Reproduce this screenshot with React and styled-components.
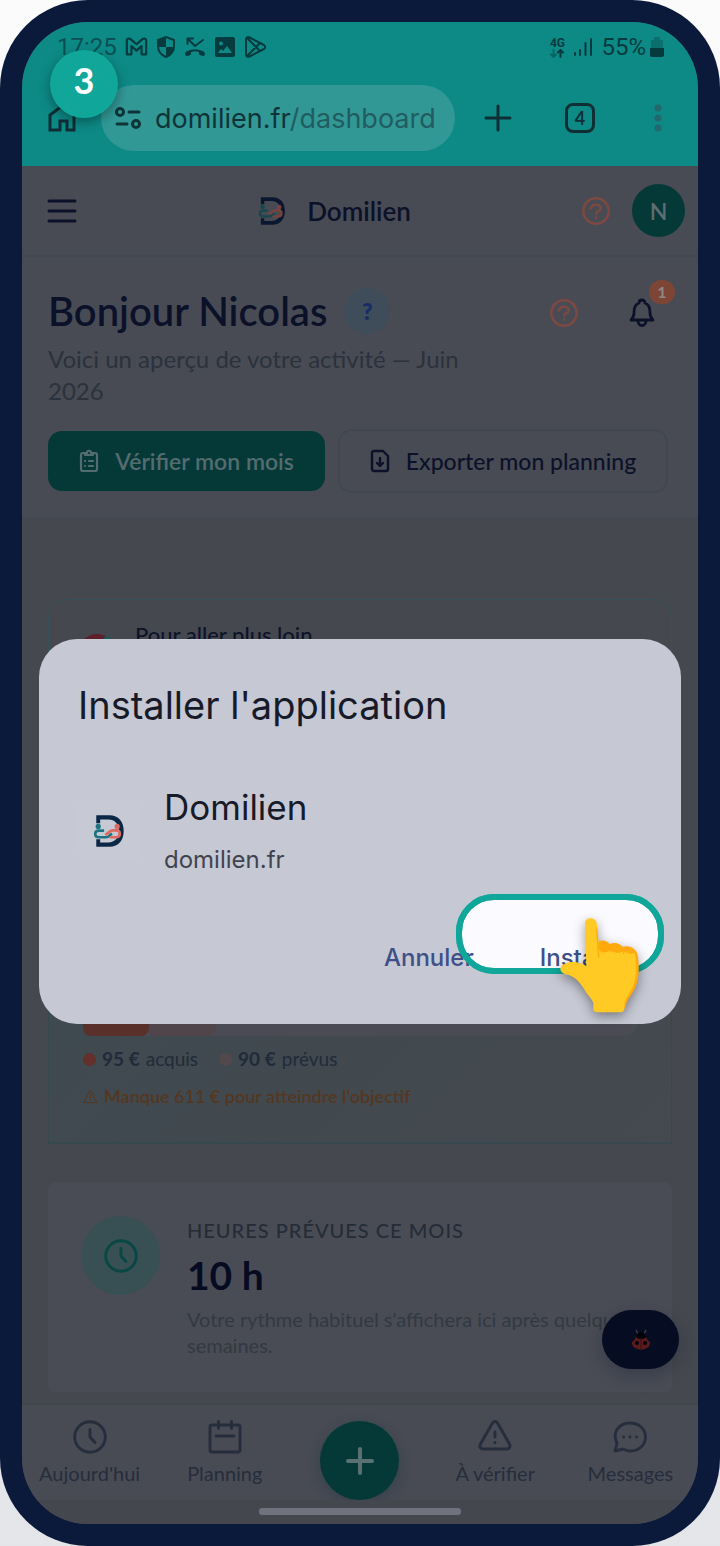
import styled, { createGlobalStyle } from 'styled-components';

const GlobalStyle = createGlobalStyle`
    * { box-sizing: border-box; }
    body {
        margin: 0;
        background: linear-gradient(#fbfbfb, #e4e5e9);
        font-family: "Lato", "Liberation Sans", sans-serif;
    }
    h1, h2, h3, p { margin: 0; }
    button {
        border: 0;
        padding: 0;
        background: none;
        font: inherit;
        color: inherit;
        cursor: pointer;
    }
    a { color: inherit; text-decoration: none; }
    svg { display: block; flex: none; }
`;

const Icon = ({ size = 32, width, height, box = '0 0 24 24', stroke = 2, children }) => (
    <svg
        width={width || size}
        height={height || size}
        viewBox={box}
        fill="none"
        stroke="currentColor"
        strokeWidth={stroke}
        strokeLinecap="round"
        strokeLinejoin="round"
        aria-hidden="true"
    >
        {children}
    </svg>
);

const HelpIcon = () => (
    <Icon size={30} box="0 0 30 30" stroke={2.6}>
        <circle cx="15" cy="15" r="12.7" />
        <path d="M9.500 12.500c1.500-3 4-4 6-3.700 3 .3 4.800 2 4.200 4.200-.6 2.400-4.400 2-4.500 4.600" />
        <path d="M15.200 21.600v.2" />
    </Icon>
);

const ClockIcon = ({ size }) => (
    <Icon size={size} box="0 0 34 34" stroke={2.9}>
        <circle cx="17" cy="17" r="15.300" />
        <path d="M17 9.500v7.500l5 5.500" />
    </Icon>
);

const Logo = ({ width, height, navy, teal, coral }) => (
    <svg width={width} height={height} viewBox="218 704 98 104" aria-hidden="true">
        <path fill={navy} d="M228 708h40c29 0 44 20 44 48s-15 48-44 48h-40v-23h12v10h25c20 0 32-14 33-35-1-21-13-35-33-35h-25v11h-12z" />
        <circle cx="234" cy="742" r="8" fill={teal} />
        <circle cx="292" cy="742" r="8" fill={coral} />
        <path d="M252 755h-16c-15 0-15 20 0 20h22c5 0 8-2 11-5l7-6" fill="none" stroke={teal} strokeWidth="8" />
        <path d="M256 768l13-10c3-3 6-4 10-4h10c15 0 15 21 0 21h-20" fill="none" stroke={coral} strokeWidth="8" />
    </svg>
);

const Hand = () => (
    <svg width="80" height="97" viewBox="600 170 240 290" aria-hidden="true">
        <path fill="#ffa90a" d="M706 262c8-24 36-24 46-8 12-6 30-4 38 8 22-6 42 4 46 26 6 40 4 70-8 98-8 18-26 34-30 62l-90-60z" />
        <path fill="#ffca24" d="M604 328c4-18 30-22 48-20 14 2 22 6 30 12l-4-130c0-18 32-18 35 0l8 82c6 8 26 10 34-2 10 12 30 14 40 2 8 10 20 14 32 8 8 40 6 72-4 98-8 20-22 34-26 52l-1 18c0 6-4 10-10 10h-72c-8 0-11-4-11-10v-18c-4-12-14-20-22-32-18-30-32-46-54-52-14-2-22-8-23-18z" />
        <path fill="none" stroke="#ffa90a" strokeWidth="4" strokeLinecap="round" d="M713 208l6 84M756 258v18M796 266l-2 16" />
    </svg>
);

export default function App() {
    return (
        <>
            <GlobalStyle />
            <Phone>
                <Screen>
                    <StatusBar>
                        <StatusGroup>
                            <Clock>17:25</Clock>
                            <Icon width={23} height={22} box="0 0 25 22" stroke={2.4}>
                                <path d="M2 19V4c0-2 2-3 4-1.500l6.500 5.500L19 2.500C21 1 23 2 23 4v15h-5v-9l-5.500 5L7 10v9z" />
                            </Icon>
                            <Icon width={20} height={24} box="0 0 20 24">
                                <path d="M10 2l8 3v6c0 5-3 9-8 11-5-2-8-6-8-11V5z" />
                                <path fill="currentColor" stroke="none" d="M10 2v10H2V5zM10 12h8c-.5 5-3 8-8 10z" />
                            </Icon>
                            <Icon width={22} height={22} box="0 0 22 22">
                                <path d="M19 4l-8 6-7-7M3.500 8V2.500H9" />
                                <path fill="currentColor" stroke="none" d="M1 18c0-6 20-6 20 0l-1 2c-2 0-5-1-5-2v-2c-3-1-5-1-8 0v2c0 1-3 2-5 2z" />
                            </Icon>
                            <Icon width={22} height={22} box="0 0 22 22">
                                <path fill="currentColor" fillRule="evenodd" stroke="none" d="M3 1h16a2 2 0 0 1 2 2v16a2 2 0 0 1-2 2H3a2 2 0 0 1-2-2V3a2 2 0 0 1 2-2zM4 17h14l-5-7-4 5-2-2zM7 5.500a2 2 0 1 0 .1 0z" />
                            </Icon>
                            <Icon width={23} height={24} box="0 0 23 24">
                                <path d="M2 4.500c0-2 1.500-3 3.500-2L20 10c1.500 1 1.500 3 0 4L5.500 21.500C3.500 22.500 2 21 2 19.500zM3 3l13 13M3 21L16 8" />
                            </Icon>
                        </StatusGroup>
                        <StatusGroup>
                            <Network>
                                4G
                                <Icon width={16} height={9} box="0 0 16 9" stroke={2}>
                                    <path d="M4.500 1v7M2 5.500L4.500 8 7 5.500" opacity=".5" />
                                    <path d="M11.500 8V1M9 3.500L11.500 1 14 3.500" />
                                </Icon>
                            </Network>
                            <Icon width={20} height={20} box="0 0 20 20" stroke={2}>
                                <path d="M2 18v-2M7 18v-5M12.500 18V6M18 18V2" />
                            </Icon>
                            <Battery>
                                55%
                                <Icon width={14} height={20} box="0 0 14 20">
                                    <path fill="currentColor" stroke="none" opacity=".35" d="M4 0h6v3h3v8H1V3h3z" />
                                    <path fill="currentColor" stroke="none" d="M0 11h14v7a2 2 0 0 1-2 2H2a2 2 0 0 1-2-2z" />
                                </Icon>
                            </Battery>
                        </StatusGroup>
                    </StatusBar>

                    <BrowserBar>
                        <button aria-label="Accueil">
                            <Icon size={30} box="0 0 30 30" stroke={3}>
                                <path strokeLinejoin="miter" d="M3 27V12L15 3l12 9v15h-7v-9h-7v9z" />
                            </Icon>
                        </button>
                        <Address>
                            <Icon width={26} height={22} box="0 0 26 22" stroke={3}>
                                <circle cx="5" cy="5" r="3.500" />
                                <circle cx="21" cy="17" r="3.500" />
                                <path d="M14 5h10M2 17h10" />
                            </Icon>
                            <span>domilien.fr<Path>/dashboard</Path></span>
                        </Address>
                        <BrowserActions>
                            <button aria-label="Nouvel onglet">
                                <Icon size={28} box="0 0 28 28" stroke={3}><path d="M14 2v24M2 14h24" /></Icon>
                            </button>
                            <Tabs aria-label="Onglets ouverts">4</Tabs>
                            <More aria-label="Plus d'options">
                                <Icon width={8} height={28} box="0 0 8 28">
                                    <g fill="currentColor" stroke="none">
                                        <circle cx="4" cy="4" r="3.500" />
                                        <circle cx="4" cy="14" r="3.500" />
                                        <circle cx="4" cy="24" r="3.500" />
                                    </g>
                                </Icon>
                            </More>
                        </BrowserActions>
                    </BrowserBar>

                    <AppHeader>
                        <MenuButton aria-label="Menu">
                            <Icon width={30} height={26} box="0 0 30 26" stroke={3}>
                                <path d="M2 3h26M2 13h26M2 23h26" />
                            </Icon>
                        </MenuButton>
                        <Brand href="#">
                            <Logo width={28} height={30} navy="#0b1730" teal="#16474d" coral="#7a433d" />
                            Domilien
                        </Brand>
                        <HeaderActions>
                            <HelpButton aria-label="Aide"><HelpIcon /></HelpButton>
                            <Avatar aria-label="Profil">N</Avatar>
                        </HeaderActions>
                    </AppHeader>

                    <Hero>
                        <HeroTop>
                            <div>
                                <Greeting>
                                    <h1>Bonjour Nicolas</h1>
                                    <Hint aria-label="Astuce">?</Hint>
                                </Greeting>
                                <Subtitle>Voici un aperçu de votre activité — Juin 2026</Subtitle>
                            </div>
                            <HeroIcons>
                                <HelpButton aria-label="Aide"><HelpIcon /></HelpButton>
                                <Bell aria-label="Notifications">
                                    <Icon size={30} box="0 0 30 30" stroke={2.8}>
                                        <path d="M4 22h22c-2-2-3-4-3-7 0-6-2-9-5-10 0-4-6-4-6 0-3 1-5 4-5 10 0 3-1 5-3 7zM11 23c0 6 8 6 8 0" />
                                    </Icon>
                                    <Badge>1</Badge>
                                </Bell>
                            </HeroIcons>
                        </HeroTop>
                        <HeroButtons>
                            <HeroButton $primary>
                                <Icon width={20} height={24} box="0 0 20 24" stroke={2.2}>
                                    <path d="M6 4H4a2 2 0 0 0-2 2v14a2 2 0 0 0 2 2h12a2 2 0 0 0 2-2V6a2 2 0 0 0-2-2h-2M6 6V4h2c0-3 4-3 4 0h2v2zM6 12h.1M6 17h.1M10 12h4M10 17h4" />
                                </Icon>
                                Vérifier mon mois
                            </HeroButton>
                            <HeroButton>
                                <Icon width={20} height={24} box="0 0 20 24" stroke={2.4}>
                                    <path d="M2 4a2 2 0 0 1 2-2h9l5 5v13a2 2 0 0 1-2 2H4a2 2 0 0 1-2-2zM10 9v8M7 14l3 3 3-3" />
                                </Icon>
                                Exporter mon planning
                            </HeroButton>
                        </HeroButtons>
                    </Hero>

                    <Main>
                        <MoreCard>
                            <Icon size={40} box="0 0 40 40" stroke={6}>
                                <circle cx="20" cy="20" r="16" stroke="#5c1f2b" />
                                <path d="M30 6l4 4" stroke="#1d5a5e" />
                            </Icon>
                            <h3>Pour aller plus loin</h3>
                        </MoreCard>

                        <GoalCard>
                            <Track>
                                <Earned />
                                <Planned />
                            </Track>
                            <Legend>
                                <li><Dot $color="#63302a" /><b>95 €</b> acquis</li>
                                <li><Dot $color="#53484c" /><b>90 €</b> prévus</li>
                            </Legend>
                            <Warning>
                                <Icon size={15} box="0 0 15 15" stroke={1}>
                                    <path d="M7.500 1.500L14 13.500H1zM7.500 5.500v4M7.500 11.500v.2" />
                                </Icon>
                                Manque 611 € pour atteindre l'objectif
                            </Warning>
                        </GoalCard>

                        <HoursCard>
                            <HoursIcon><ClockIcon size={34} /></HoursIcon>
                            <div>
                                <Label>Heures prévues ce mois</Label>
                                <Hours>10 h</Hours>
                                <Note>Votre rythme habituel s'affichera ici après quelques semaines.</Note>
                            </div>
                        </HoursCard>

                        <BugButton aria-label="Signaler un bug">
                            <svg width="20" height="22" viewBox="0 0 20 22" aria-hidden="true">
                                <path d="M7 5L5 1M13 5l2-4" stroke="#3d3b46" strokeWidth="1.500" />
                                <path d="M5 9c0-8 10-8 10 0z" fill="#020309" />
                                <path d="M1 13c2-1 3-3 4-5 2 3 8 3 10 0 1 2 2 4 4 5 1 10-19 10-18 0z" fill="#5b1b1b" />
                                <path d="M10 10v10" stroke="#3a1014" strokeWidth="1" />
                                <circle cx="6" cy="14" r="2" fill="#020309" />
                                <circle cx="14" cy="14" r="2" fill="#020309" />
                            </svg>
                        </BugButton>
                    </Main>

                    <Nav>
                        <NavItem href="#">
                            <ClockIcon size={34} />
                            Aujourd'hui
                        </NavItem>
                        <NavItem href="#">
                            <Icon size={34} box="0 0 34 34" stroke={2.9}>
                                <path d="M4 5h26a2 2 0 0 1 2 2v23a2 2 0 0 1-2 2H4a2 2 0 0 1-2-2V7a2 2 0 0 1 2-2zM10.500 1.500v7M23.500 1.500v7M8 16h18" />
                            </Icon>
                            Planning
                        </NavItem>
                        <AddButton aria-label="Ajouter">
                            <Icon size={28} box="0 0 28 28" stroke={4}><path d="M14 2v24M2 14h24" /></Icon>
                        </AddButton>
                        <NavItem href="#">
                            <Icon size={34} box="0 0 34 34" stroke={2.9}>
                                <path d="M14.500 3c1-2 4-2 5 0l12 21c1.500 3-.5 5-3 5h-23c-3 0-4.500-2-3-5zM17 12v5M17 22.500v.2" />
                            </Icon>
                            À vérifier
                        </NavItem>
                        <NavItem href="#">
                            <Icon size={34} box="0 0 34 34" stroke={2.9}>
                                <path d="M2 31l2-8C-1 13 5 3 17 3c9 0 15.500 6 15.500 14S26 31 17 31c-3 0-5-1-7-2zM10.500 17h.1M17 17h.1M23.500 17h.1" />
                            </Icon>
                            Messages
                        </NavItem>
                    </Nav>
                    <GestureArea><GestureBar /></GestureArea>

                    <Overlay>
                        <Dialog role="dialog" aria-labelledby="install-title">
                            <h2 id="install-title">Installer l'application</h2>
                            <AppRow>
                                <AppIcon>
                                    <Logo width={32} height={34} navy="#0b2746" teal="#1c7480" coral="#dc6a60" />
                                </AppIcon>
                                <div>
                                    <AppName>Domilien</AppName>
                                    <AppHost>domilien.fr</AppHost>
                                </div>
                            </AppRow>
                            <DialogActions>
                                <Spot />
                                <DialogButton>Annuler</DialogButton>
                                <DialogButton>Installer</DialogButton>
                                <Spot $ring />
                                <Pointer><Hand /></Pointer>
                            </DialogActions>
                        </Dialog>
                    </Overlay>
                    <Step>3</Step>
                </Screen>
            </Phone>
        </>
    );
}

const Phone = styled.div`
    display: flex;
    min-height: 100vh;
    padding: 22px;
    border-radius: 88px;
    background: #0b193b;
`;

const Screen = styled.div`
    position: relative;
    flex: 1;
    min-width: 0;
    display: flex;
    flex-direction: column;
    border-radius: 66px;
    background: #45484f;
    overflow: hidden;
`;

const StatusBar = styled.div`
    display: flex;
    align-items: center;
    justify-content: space-between;
    height: 50px;
    padding: 0 34px 0 35px;
    background: #0d8a86;
    color: #053b3e;
    font-family: Roboto, sans-serif;
    font-size: 24px;
`;

const StatusGroup = styled.div`
    display: flex;
    align-items: center;
    gap: 8px;
`;

const Clock = styled.span`
    color: #0a5054;
`;

const Network = styled.span`
    display: flex;
    flex-direction: column;
    align-items: center;
    font-size: 12px;
    line-height: 12px;
    font-weight: 700;
`;

const Battery = styled.span`
    display: flex;
    align-items: center;
    gap: 4px;
`;

const BrowserBar = styled.div`
    display: flex;
    align-items: center;
    height: 94px;
    padding: 0 36px 2px 25px;
    background: #0d8a86;
    color: #0f2f35;
`;

const Address = styled.button`
    flex: 1;
    display: flex;
    align-items: center;
    gap: 14px;
    height: 66px;
    margin: 0 29px 0 24px;
    padding: 0 0 0 14px;
    border-radius: 33px;
    background: #329896;
    font-family: Inter, sans-serif;
    font-size: 27px;
    color: #0f3438;
    white-space: nowrap;
`;

const Path = styled.span`
    color: #215c60;
`;

const BrowserActions = styled.div`
    display: flex;
    align-items: center;
    gap: 53px;
`;

const Tabs = styled.button`
    width: 30px;
    height: 30px;
    border: 3px solid #0f2f35;
    border-radius: 8px;
    font-size: 18px;
    line-height: 24px;
    font-weight: 700;
`;

const More = styled.button`
    padding-left: 6px;
    color: #23686c;
`;

const AppHeader = styled.header`
    display: flex;
    align-items: center;
    justify-content: space-between;
    height: 91px;
    padding: 0 13px 0 25px;
    background: #484b54;
    border-bottom: 2px solid #434952;
    color: #0b1129;
`;

const MenuButton = styled.button`
    width: 41px;
`;

const Brand = styled.a`
    display: flex;
    align-items: center;
    gap: 21px;
    font-size: 26px;
    font-weight: 600;
`;

const HeaderActions = styled.div`
    display: flex;
    align-items: center;
    gap: 21px;
`;

const HelpButton = styled.button`
    color: #7c4942;
`;

const Avatar = styled.button`
    width: 53px;
    height: 53px;
    border-radius: 50%;
    background: #053938;
    color: #5f6d72;
    font-size: 23px;
    font-weight: 600;
`;

const Hero = styled.section`
    padding: 30px 30px 24px 26px;
    background: #484b54;
    border-bottom: 2px solid #434851;
`;

const HeroTop = styled.div`
    display: flex;
    justify-content: space-between;
`;

const Greeting = styled.div`
    display: flex;
    align-items: center;
    gap: 17px;
    color: #0b1129;
    h1{
        font-size: 40px;
        line-height: 48px;
        font-weight: 600;
    }
`;

const Hint = styled.button`
    width: 46px;
    height: 46px;
    border-radius: 50%;
    background: #3f4c59;
    color: #182c65;
    font-size: 22px;
    font-weight: 800;
`;

const Subtitle = styled.p`
    max-width: 430px;
    padding-top: 8px;
    font-size: 24px;
    line-height: 32px;
    color: #2b323c;
`;

const HeroIcons = styled.div`
    display: flex;
    gap: 48px;
    height: 52px;
    padding-right: 11px;
`;

const Bell = styled.button`
    position: relative;
    color: #0b1129;
`;

const Badge = styled.span`
    position: absolute;
    top: -7px;
    right: -18px;
    width: 26px;
    border-radius: 12px;
    background: #7c4536;
    color: #8f8784;
    font-size: 16px;
    line-height: 24px;
    font-weight: 700;
`;

const HeroButtons = styled.div`
    display: grid;
    grid-template-columns: 277fr 330fr;
    align-items: center;
    gap: 13px;
    padding-top: 22px;
`;

const HeroButton = styled.button`
    display: flex;
    align-items: center;
    justify-content: center;
    gap: 16px;
    height: ${({ $primary }) => ($primary ? '60px' : '64px')};
    border: ${({ $primary }) => ($primary ? '0' : '2px solid #42474f')};
    border-radius: 14px;
    background: ${({ $primary }) => ($primary ? '#053938' : 'transparent')};
    color: ${({ $primary }) => ($primary ? '#546c6f' : '#0b1129')};
    font-size: 23px;
    font-weight: ${({ $primary }) => ($primary ? 600 : 500)};
    white-space: nowrap;
`;

const Main = styled.main`
    position: relative;
    flex: 1;
    display: flex;
    flex-direction: column;
    padding: 80px 26px 11px;
`;

const MoreCard = styled.section`
    display: flex;
    align-items: flex-start;
    gap: 18px;
    padding: 15px 28px;
    border: 1px solid #34525a;
    border-radius: 18px;
    color: #0d1329;
    h3{
        font-size: 22px;
        line-height: 40px;
        font-weight: 500;
    }
    svg{
        margin-top: 18px;
    }
`;

const GoalCard = styled.section`
    flex: 1;
    display: flex;
    flex-direction: column;
    justify-content: flex-end;
    margin: 24px 0 38px;
    padding: 0 34px 34px;
    border: 1px solid #35494f;
    border-width: 0 1px 2px;
    background: linear-gradient(135deg, #3d4b51, #41494f 60%, #454950);
`;

const Track = styled.div`
    display: flex;
    height: 26px;
    border-radius: 13px;
    background: #4a4b55;
`;

const Earned = styled.span`
    width: 12%;
    border-radius: 0 8px 8px 8px;
    background: #5a302b;
`;

const Planned = styled.span`
    width: 12%;
    border-radius: 0 8px 8px 0;
    background: #50454a;
`;

const Legend = styled.ul`
    display: flex;
    gap: 21px;
    margin: 0;
    padding: 10px 0 12px;
    list-style: none;
    font-size: 19px;
    line-height: 26px;
    color: #1f2b3a;
    li{
        display: flex;
        align-items: center;
        gap: 6px;
    }
`;

const Dot = styled.span`
    width: 13px;
    height: 13px;
    border-radius: 50%;
    background: ${({ $color }) => $color};
`;

const Warning = styled.p`
    display: flex;
    align-items: center;
    gap: 6px;
    font-size: 18px;
    line-height: 24px;
    font-weight: 600;
    color: #55371f;
`;

const HoursCard = styled.section`
    display: flex;
    gap: 27px;
    padding: 34px 33px;
    border-radius: 8px;
    background: #494c55;
`;

const HoursIcon = styled.span`
    flex: none;
    display: flex;
    align-items: center;
    justify-content: center;
    width: 79px;
    height: 79px;
    border-radius: 50%;
    background: #385053;
    color: #0a4644;
`;

const Label = styled.h3`
    font-size: 20px;
    line-height: 28px;
    font-weight: 500;
    letter-spacing: 1px;
    text-transform: uppercase;
    color: #252c38;
`;

const Hours = styled.p`
    font-size: 39px;
    line-height: 62px;
    font-weight: 700;
    color: #060b22;
`;

const Note = styled.p`
    font-size: 20px;
    line-height: 26px;
    color: #333942;
`;

const BugButton = styled.button`
    position: absolute;
    right: 19px;
    bottom: 34px;
    display: flex;
    align-items: center;
    justify-content: center;
    width: 77px;
    height: 59px;
    border-radius: 30px;
    background: #060d22;
    box-shadow: 0 6px 18px rgba(10, 15, 35, .25);
`;

const Nav = styled.nav`
    display: grid;
    grid-template-columns: repeat(5, 1fr);
    justify-items: center;
    height: 97px;
    background: #484b54;
    border-top: 2px solid #42464e;
`;

const NavItem = styled.a`
    display: flex;
    flex-direction: column;
    align-items: center;
    gap: 7px;
    padding-top: 15px;
    font-size: 20px;
    line-height: 24px;
    color: #262d3c;
    white-space: nowrap;
`;

const AddButton = styled.button`
    display: flex;
    align-items: center;
    justify-content: center;
    width: 79px;
    height: 79px;
    margin-top: 16px;
    border-radius: 50%;
    background: #053938;
    color: #5a7073;
    box-shadow: 0 4px 14px rgba(5, 40, 50, .3);
`;

const GestureArea = styled.div`
    display: flex;
    justify-content: center;
    height: 24px;
    padding-top: 8px;
    background: #45474f;
`;

const GestureBar = styled.span`
    width: 30%;
    height: 7px;
    border-radius: 3px;
    background: #70737e;
`;

const Overlay = styled.div`
    position: absolute;
    inset: 0;
    display: flex;
    align-items: center;
    padding: 116px 17px 0;
`;

const Dialog = styled.section`
    flex: 1;
    padding: 42px 50px 38px 39px;
    border-radius: 38px;
    background: #c6c8d4;
    color: #171a28;
    font-family: Inter, sans-serif;
    h2{
        font-size: 38px;
        line-height: 48px;
        font-weight: 400;
    }
`;

const AppRow = styled.div`
    display: flex;
    align-items: center;
    gap: 24px;
    padding: 54px 0;
`;

const AppIcon = styled.span`
    display: flex;
    align-items: center;
    justify-content: center;
    width: 62px;
    height: 62px;
    margin-top: 4px;
    border-radius: 8px;
    background: #c7cad5;
`;

const AppName = styled.p`
    font-size: 35px;
    line-height: 48px;
`;

const AppHost = styled.p`
    padding-top: 13px;
    font-size: 24px;
    line-height: 32px;
    color: #41444f;
`;

const DialogActions = styled.div`
    position: relative;
    display: flex;
    justify-content: flex-end;
    gap: 66px;
`;

const DialogButton = styled.button`
    position: relative;
    height: 56px;
    font-size: 24px;
    font-weight: 500;
    color: #3d5087;
`;

const Spot = styled.span`
    position: absolute;
    top: -36px;
    right: -33px;
    width: 208px;
    height: 80px;
    border: 6px solid #10a79a;
    border-radius: 38px;
    background: ${({ $ring }) => ($ring ? 'transparent' : '#fafaff')};
    pointer-events: none;
`;

const Pointer = styled.span`
    position: absolute;
    top: -14px;
    right: -8px;
    filter: drop-shadow(0 4px 6px rgba(0, 0, 0, .4));
    pointer-events: none;
`;

const Step = styled.span`
    position: absolute;
    top: 28px;
    left: 28px;
    width: 68px;
    height: 68px;
    border-radius: 50%;
    background: #10a79a;
    box-shadow: 0 4px 12px rgba(0, 0, 0, .35);
    color: #fff;
    font-size: 36px;
    line-height: 60px;
    font-weight: 700;
    text-align: center;
`;
